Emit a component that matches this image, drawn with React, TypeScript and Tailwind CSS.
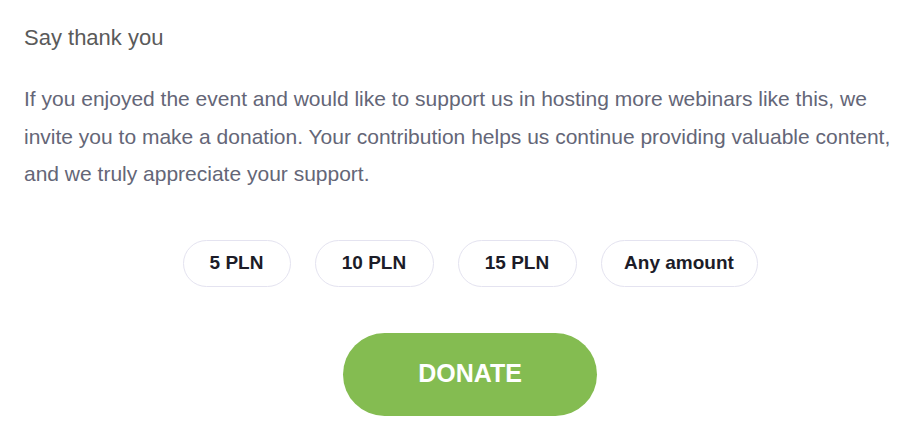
const amounts = [
  { label: '5 PLN', width: 'w-[108px]' },
  { label: '10 PLN', width: 'w-[119px]' },
  { label: '15 PLN', width: 'w-[119px]' },
  { label: 'Any amount', width: 'w-[157px]' },
];

export default function App() {
  return (
    <div
      className="min-h-screen bg-white pt-6 pl-6 pr-[6px]"
      style={{ fontFamily: '"Liberation Sans", Arial, sans-serif' }}
    >
      <h2 className="text-[22px] leading-7 text-[#5a5a5a]">Say thank you</h2>

      <p className="mt-[28px] pr-[18px] text-[21px] leading-[37.5px] text-[#646677]">
        If you enjoyed the event and would like to support us in hosting more webinars like this, we
        invite you to make a donation. Your contribution helps us continue providing valuable content,
        and we truly appreciate your support.
      </p>

      <div className="mt-[47px] flex justify-center gap-6">
        {amounts.map((amount) => (
          <button
            key={amount.label}
            className={`${amount.width} h-[47px] rounded-full border border-[#e4e3f0] bg-white text-[19px] font-bold text-[#1c1c28]`}
          >
            {amount.label}
          </button>
        ))}
      </div>

      <div className="mt-[46px] flex justify-center">
        <button className="h-[83px] w-[254px] rounded-full bg-[#84bc51] text-[25px] font-bold text-white">
          DONATE
        </button>
      </div>
    </div>
  );
}
